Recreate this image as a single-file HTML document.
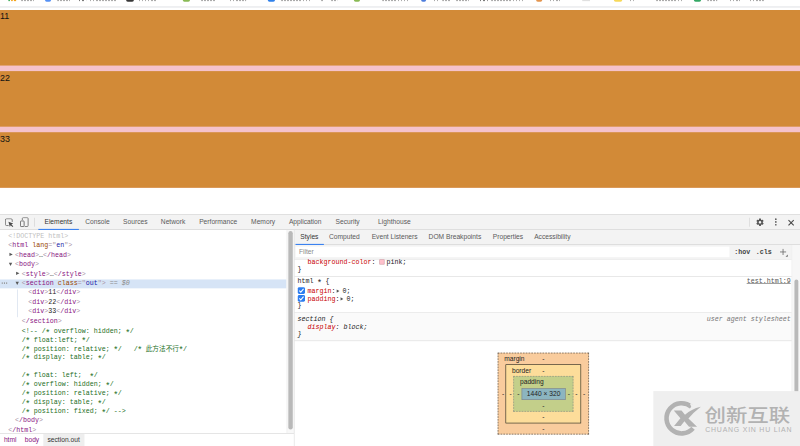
<!DOCTYPE html>
<html lang="en">
<head>
<meta charset="utf-8">
<title>test.html</title>
<style>
html,body{margin:0;padding:0;background:#fff;}
body{width:800px;height:446px;overflow:hidden;position:relative;}
#root{position:absolute;left:0;top:0;width:1440px;height:803px;transform:scale(0.555556);transform-origin:0 0;background:#fff;overflow:hidden;font-family:"Liberation Sans","Noto Sans CJK SC",sans-serif;font-size:12px;color:#333;}
.abs{position:absolute;}
#chrome i{position:absolute;display:block;}
/* page */
#page{position:absolute;left:0;top:18px;width:1440px;height:320px;background:#f5c2cb;}
#page div{height:100px;margin-bottom:10px;background:#d28a37;font-size:16px;line-height:22px;color:#111;padding-top:1px;box-sizing:border-box;}
/* devtools */
#dt{position:absolute;left:0;top:386px;width:1440px;height:417px;background:#fff;}
#tb{position:absolute;left:0;top:0;width:1440px;height:28px;z-index:4;box-sizing:border-box;background:#f3f3f3;border-top:1px solid #cdcdcd;border-bottom:1px solid #cdcdcd;}
.tab{position:absolute;top:0;height:25px;line-height:25px;font-size:12px;color:#5a5a5a;white-space:nowrap;}
.tab.sel{color:#333;}
.mono{font-family:"Liberation Mono","Noto Sans CJK SC",monospace;font-size:12px;}
#tree{position:absolute;left:0;top:29px;width:516px;height:366px;overflow:hidden;}
.row{position:absolute;left:0;white-space:pre;height:17px;line-height:17px;font-family:"Liberation Mono","Noto Sans CJK SC",monospace;font-size:12px;color:#222;}
.t{color:#881280;} .b{color:#a894a6;} .an{color:#994500;} .av{color:#1a1aa6;} .c{color:#236e25;} .g{color:#c0c0c0;}
.arr{position:absolute;width:0;height:0;}
.arr.r{border-left:6px solid #585858;border-top:3.8px solid transparent;border-bottom:3.8px solid transparent;}
.arr.d{border-top:6px solid #585858;border-left:3.8px solid transparent;border-right:3.8px solid transparent;}
#crumbs{position:absolute;left:0;top:394px;width:529px;height:23px;border-top:1px solid #d0d0d0;box-sizing:border-box;background:#fff;}
#crumbs span{position:absolute;top:0;height:22px;line-height:22px;font-size:12px;}
/* styles pane */
#side{position:absolute;left:530px;top:27px;width:910px;height:390px;background:#fff;}
#stabs{position:absolute;left:0;top:0;width:910px;height:28px;background:#f3f3f3;border-bottom:1px solid #cdcdcd;box-sizing:border-box;}
.srow{position:absolute;white-space:pre;font-family:"Liberation Mono","Noto Sans CJK SC",monospace;font-size:12px;line-height:14px;height:14px;color:#222;}
.pn{color:#c80000;}
.ast{display:inline-block;width:7.200px;font-size:15px;line-height:10px;height:10px;position:relative;top:5px;left:-0.900px;}
.sep{position:absolute;left:-1px;width:896px;height:1px;background:#d6d6d6;}
.cb{position:absolute;width:13px;height:12px;border-radius:2.500px;background:#2b7cf0;}
.bm{position:absolute;box-sizing:border-box;}
.bl{position:absolute;font-size:12px;line-height:14px;color:#222;white-space:nowrap;}
</style>
</head>
<body>
<div id="root">

<!-- browser chrome sliver -->
<div id="chrome" class="abs" style="left:0;top:0;width:1440px;height:18px;background:#fff;">
  <div class="abs" style="left:0;top:11.300px;width:1440px;height:2.600px;background:#eceef0;"></div>
  <i style="left:37.8px;width:23.4px;top:0;height:2.200px;background:repeating-linear-gradient(90deg,#666 0 2.500px,transparent 2.500px 5.500px);opacity:.55"></i>
  <i style="left:102.6px;width:23.4px;top:0;height:2.200px;background:repeating-linear-gradient(90deg,#666 0 2.500px,transparent 2.500px 5.500px);opacity:.55"></i>
  <i style="left:142.2px;width:12.6px;top:0;height:2.200px;background:repeating-linear-gradient(90deg,#222 0 2.500px,transparent 2.500px 6px);opacity:.6"></i>
  <i style="left:162.0px;width:46.8px;top:0;height:2.200px;background:repeating-linear-gradient(90deg,#666 0 2.500px,transparent 2.500px 5.500px);opacity:.55"></i>
  <i style="left:250.2px;width:30.6px;top:0;height:2.200px;background:repeating-linear-gradient(90deg,#666 0 2.500px,transparent 2.500px 5.500px);opacity:.55"></i>
  <i style="left:361.8px;width:25.2px;top:0;height:2.200px;background:repeating-linear-gradient(90deg,#666 0 2.500px,transparent 2.500px 5.500px);opacity:.55"></i>
  <i style="left:414.0px;width:28.8px;top:0;height:2.200px;background:repeating-linear-gradient(90deg,#666 0 2.500px,transparent 2.500px 5.500px);opacity:.55"></i>
  <i style="left:505.8px;width:54.0px;top:0;height:2.200px;background:repeating-linear-gradient(90deg,#666 0 2.500px,transparent 2.500px 5.500px);opacity:.55"></i>
  <i style="left:577.8px;width:5.4px;top:0;height:2.200px;background:repeating-linear-gradient(90deg,#666 0 2.500px,transparent 2.500px 5.500px);opacity:.55"></i>
  <i style="left:595.8px;width:10.8px;top:0;height:2.200px;background:repeating-linear-gradient(90deg,#666 0 2.500px,transparent 2.500px 5.500px);opacity:.55"></i>
  <i style="left:687.6px;width:50.4px;top:0;height:2.200px;background:repeating-linear-gradient(90deg,#666 0 2.500px,transparent 2.500px 5.500px);opacity:.55"></i>
  <i style="left:781.2px;width:9.0px;top:0;height:2.200px;background:repeating-linear-gradient(90deg,#666 0 2.500px,transparent 2.500px 5.500px);opacity:.55"></i>
  <i style="left:795.6px;width:14.4px;top:0;height:2.200px;background:repeating-linear-gradient(90deg,#666 0 2.500px,transparent 2.500px 5.500px);opacity:.55"></i>
  <i style="left:820.8px;width:23.4px;top:0;height:2.200px;background:repeating-linear-gradient(90deg,#666 0 2.500px,transparent 2.500px 5.500px);opacity:.55"></i>
  <i style="left:864.0px;width:13.5px;top:0;height:2.200px;background:repeating-linear-gradient(90deg,#222 0 2.500px,transparent 2.500px 6px);opacity:.6"></i>
  <i style="left:883.8px;width:61.2px;top:0;height:2.200px;background:repeating-linear-gradient(90deg,#666 0 2.500px,transparent 2.500px 5.500px);opacity:.55"></i>
  <i style="left:990.0px;width:18.0px;top:0;height:2.200px;background:repeating-linear-gradient(90deg,#666 0 2.500px,transparent 2.500px 5.500px);opacity:.55"></i>
  <i style="left:1047.6px;width:14.4px;top:0;height:1.800px;background:#ccc;opacity:.6"></i>
  <i style="left:1134.0px;width:7.2px;top:0;height:2.200px;background:repeating-linear-gradient(90deg,#666 0 2.500px,transparent 2.500px 5.500px);opacity:.55"></i>
  <i style="left:1180.8px;width:46.8px;top:0;height:2.200px;background:repeating-linear-gradient(90deg,#666 0 2.500px,transparent 2.500px 5.500px);opacity:.55"></i>
  <i style="left:1272.6px;width:18.0px;top:0;height:2.200px;background:repeating-linear-gradient(90deg,#666 0 2.500px,transparent 2.500px 5.500px);opacity:.55"></i>
  <i style="left:1314.0px;width:18.0px;top:0;height:2.200px;background:repeating-linear-gradient(90deg,#666 0 2.500px,transparent 2.500px 5.500px);opacity:.55"></i>
  <i style="left:1350.0px;width:25.2px;top:0;height:2.200px;background:repeating-linear-gradient(90deg,#666 0 2.500px,transparent 2.500px 5.500px);opacity:.55"></i>
  <i style="left:15.1px;width:3.2px;top:0;height:2px;background:#34a853;opacity:.9"></i>
  <i style="left:20.2px;width:3.2px;top:0;height:2px;background:#f29900;opacity:.9"></i><i style="left:25.2px;width:3.8px;top:0;height:2px;background:#f29900;opacity:.9"></i>
  <i style="left:81.0px;width:10.8px;top:0;height:2.800px;background:#4285f4;opacity:.9;border-radius:0 0 3px 3px"></i>
  <i style="left:226.8px;width:14.4px;top:0;height:2.800px;background:#222;opacity:.9;border-radius:0 0 3px 3px"></i>
  <i style="left:328.5px;width:13.5px;top:0;height:2.800px;background:#7cb342;opacity:.9;border-radius:0 0 3px 3px"></i>
  <i style="left:481.5px;width:13.5px;top:0;height:2.800px;background:#1a73e8;opacity:.9;border-radius:0 0 3px 3px"></i>
  <i style="left:637.2px;width:10.8px;top:0;height:2.800px;background:#7cb342;opacity:.9;border-radius:0 0 3px 3px"></i>
  <i style="left:757.8px;width:9.0px;top:0;height:2.800px;background:#3b6fd8;opacity:.9;border-radius:0 0 3px 3px"></i>
  <i style="left:964.8px;width:11.7px;top:0;height:2.800px;background:#e08a3c;opacity:.9;border-radius:0 0 3px 3px"></i>
  <i style="left:1105.2px;width:14.4px;top:0;height:2.800px;background:#f6d548;opacity:.9;border-radius:0 0 3px 3px"></i>
  <i style="left:1249.2px;width:12.6px;top:0;height:2.800px;background:#1e9e54;opacity:.9;border-radius:0 0 3px 3px"></i>
</div>

<!-- page -->
<section id="page"><div>11</div><div>22</div><div>33</div></section>

<!-- devtools -->
<div id="dt">
  <div id="tb">
    <svg class="abs" style="left:9px;top:6px;" width="17" height="17" viewBox="0 0 17 17"><path d="M13 6.500V2.900a2.200 2.200 0 0 0-2.200-2.200H2.900a2.200 2.200 0 0 0-2.200 2.200v7.900a2.200 2.200 0 0 0 2.200 2.200H6.500" fill="none" stroke="#6a6a6a" stroke-width="1.500"/><path d="M6.200 6.200l8.600 3.300-3.300 1.400 3.400 3.400-1.400 1.400-3.400-3.400-1.400 3.300z" fill="#4a4a4a"/></svg>
    <svg class="abs" style="left:36px;top:4px;" width="17" height="18" viewBox="0 0 17 18"><path d="M4.200 5V2.400a1.700 1.700 0 0 1 1.700-1.700h7a1.700 1.700 0 0 1 1.700 1.700v12.700a1.700 1.700 0 0 1-1.700 1.700H8.500" fill="none" stroke="#6a6a6a" stroke-width="1.500"/><rect x="0.800" y="6.700" width="6.600" height="10.100" rx="1.300" fill="none" stroke="#5a5a5a" stroke-width="1.500"/></svg>
    <div class="abs" style="left:61.500px;top:5px;width:1px;height:16px;background:#cacaca;"></div>
    <div class="tab sel" style="left:80px;">Elements</div>
    <div class="abs" style="left:69px;top:24.500px;width:73px;height:2.500px;background:#3b82f0;"></div>
    <div class="tab" style="left:153.5px;">Console</div>
    <div class="tab" style="left:221.5px;">Sources</div>
    <div class="tab" style="left:289.5px;">Network</div>
    <div class="tab" style="left:358.5px;">Performance</div>
    <div class="tab" style="left:452px;">Memory</div>
    <div class="tab" style="left:520px;">Application</div>
    <div class="tab" style="left:604px;">Security</div>
    <div class="tab" style="left:680.5px;">Lighthouse</div>
    <div class="abs" style="left:1349px;top:5px;width:1px;height:16px;background:#cfcfcf;"></div>
    <svg class="abs" style="left:1360px;top:5px;" width="16" height="16" viewBox="0 0 24 24"><path fill="#555" d="M19.43 12.98c.04-.32.07-.64.07-.98s-.03-.66-.07-.98l2.11-1.65c.19-.15.24-.42.12-.64l-2-3.46c-.12-.22-.39-.3-.61-.22l-2.49 1c-.52-.4-1.08-.73-1.69-.98l-.38-2.65A.488.488 0 0 0 14 2h-4c-.25 0-.46.18-.49.42l-.38 2.65c-.61.25-1.17.59-1.69.98l-2.49-1c-.23-.09-.49 0-.61.22l-2 3.46c-.13.22-.07.49.12.64l2.11 1.65c-.04.32-.07.65-.07.98s.03.66.07.98l-2.11 1.65c-.19.15-.24.42-.12.64l2 3.46c.12.22.39.3.61.22l2.49-1c.52.4 1.08.73 1.69.98l.38 2.65c.03.24.24.42.49.42h4c.25 0 .46-.18.49-.42l.38-2.65c.61-.25 1.17-.59 1.69-.98l2.49 1c.23.09.49 0 .61-.22l2-3.46c.12-.22.07-.49-.12-.64l-2.11-1.65zM12 15.5c-1.93 0-3.500-1.57-3.500-3.500s1.570-3.500 3.500-3.500 3.500 1.570 3.500 3.500-1.570 3.500-3.500 3.500z"/></svg>
    <div class="abs" style="left:1395px;top:6px;width:3px;height:3px;border-radius:50%;background:#555;box-shadow:0 5px 0 #555,0 10px 0 #555;"></div>
    <svg class="abs" style="left:1417px;top:6.500px;" width="14" height="14" viewBox="0 0 14 14"><path d="M2.300 2.300l9.400 9.400M11.700 2.300L2.300 11.700" stroke="#4a4a4a" stroke-width="2" fill="none"/></svg>
  </div>

  <!-- elements tree -->
  <div id="tree">
    <div class="abs" style="left:0;top:88px;width:516px;height:16px;background:#d6e4f6;"></div>
    <div class="abs" style="left:31px;top:106px;width:1px;height:50px;background:#c9d6e8;"></div>
    <div class="row g" style="left:15px;top:2px;">&lt;!DOCTYPE html&gt;</div>
    <div class="row" style="left:15px;top:19px;"><span class="b">&lt;</span><span class="t">html</span> <span class="an">lang</span><span class="b">="</span><span class="av">en</span><span class="b">"&gt;</span></div>
    <div class="arr r" style="left:17px;top:40px;"></div>
    <div class="row" style="left:27px;top:36px;"><span class="b">&lt;</span><span class="t">head</span><span class="b">&gt;</span>…<span class="b">&lt;</span><span class="t">/head</span><span class="b">&gt;</span></div>
    <div class="arr d" style="left:16px;top:57.500px;"></div>
    <div class="row" style="left:27px;top:53px;"><span class="b">&lt;</span><span class="t">body</span><span class="b">&gt;</span></div>
    <div class="arr r" style="left:29px;top:74px;"></div>
    <div class="row" style="left:39px;top:70px;"><span class="b">&lt;</span><span class="t">style</span><span class="b">&gt;</span>…<span class="b">&lt;</span><span class="t">/style</span><span class="b">&gt;</span></div>
    <div class="abs" style="left:2.500px;top:93px;width:2.500px;height:2.500px;border-radius:50%;background:#8e8e8e;box-shadow:4px 0 0 #8e8e8e,8px 0 0 #8e8e8e;"></div>
    <div class="arr d" style="left:28px;top:91.500px;"></div>
    <div class="row" style="left:39px;top:87px;"><span class="b">&lt;</span><span class="t">section</span> <span class="an">class</span><span class="b">="</span><span class="av">out</span><span class="b">"&gt;</span><span style="color:#8a8a8a"> == <i>$0</i></span></div>
    <div class="row" style="left:51px;top:104px;"><span class="b">&lt;</span><span class="t">div</span><span class="b">&gt;</span>11<span class="b">&lt;</span><span class="t">/div</span><span class="b">&gt;</span></div>
    <div class="row" style="left:51px;top:121px;"><span class="b">&lt;</span><span class="t">div</span><span class="b">&gt;</span>22<span class="b">&lt;</span><span class="t">/div</span><span class="b">&gt;</span></div>
    <div class="row" style="left:51px;top:138px;"><span class="b">&lt;</span><span class="t">div</span><span class="b">&gt;</span>33<span class="b">&lt;</span><span class="t">/div</span><span class="b">&gt;</span></div>
    <div class="row" style="left:39px;top:155px;"><span class="b">&lt;</span><span class="t">/section</span><span class="b">&gt;</span></div>
    <div class="row c" style="left:39px;top:172.600px;height:160px;line-height:16px;">&lt;!-- /<span class="ast">*</span> overflow: hidden; <span class="ast">*</span>/
/<span class="ast">*</span> float:left; <span class="ast">*</span>/
/<span class="ast">*</span> position: relative; <span class="ast">*</span>/   /<span class="ast">*</span> 此方法不行<span class="ast">*</span>/
/<span class="ast">*</span> display: table; <span class="ast">*</span>/

/<span class="ast">*</span> float: left;  <span class="ast">*</span>/
/<span class="ast">*</span> overflow: hidden; <span class="ast">*</span>/
/<span class="ast">*</span> position: relative; <span class="ast">*</span>/
/<span class="ast">*</span> display: table; <span class="ast">*</span>/
/<span class="ast">*</span> position: fixed; <span class="ast">*</span>/ --&gt;</div>
    <div class="row" style="left:27px;top:333.700px;"><span class="b">&lt;</span><span class="t">/body</span><span class="b">&gt;</span></div>
    <div class="row" style="left:15px;top:350.700px;"><span class="b">&lt;</span><span class="t">/html</span><span class="b">&gt;</span></div>
  </div>
  <!-- left scrollbar -->
  <div class="abs" style="left:515.500px;top:27px;width:14px;height:367px;background:#f8f8f8;border-left:1px solid #ececec;box-sizing:border-box;"></div>
  <div class="abs" style="left:529px;top:27px;width:1px;height:390px;background:#d9d9d9;z-index:3;"></div>
  <div class="abs" style="left:518.800px;top:30px;width:8px;height:356.500px;border-radius:4px;background:#b9b9b9;"></div>

  <div id="crumbs">
    <span style="left:7px;color:#881280;">html</span>
    <span style="left:44.5px;color:#881280;">body</span>
    <span style="left:77.500px;width:74.500px;background:#eeeeee;"></span>
    <span style="left:85.500px;color:#333;">section.out</span>
  </div>

  <!-- styles sidebar -->
  <div id="side">
    <div id="stabs">
      <div class="tab sel" style="left:10.500px;top:1px;">Styles</div>
      <div class="abs" style="left:2px;top:25.500px;width:51px;height:2.500px;background:#3b82f0;"></div>
      <div class="tab" style="left:62px;top:1px;">Computed</div>
      <div class="tab" style="left:139px;top:1px;">Event Listeners</div>
      <div class="tab" style="left:241.500px;top:1px;">DOM Breakpoints</div>
      <div class="tab" style="left:357px;top:1px;">Properties</div>
      <div class="tab" style="left:431.500px;top:1px;">Accessibility</div>
    </div>
    <!-- filter row -->
    <div class="abs" style="left:0;top:28px;width:910px;height:27px;background:#f3f3f3;border-bottom:1px solid #e9e9e9;box-sizing:border-box;"></div>
    <div class="abs" style="left:2px;top:30.700px;width:780.500px;height:19px;background:#fff;"></div>
    <div class="abs" style="left:8px;top:30px;line-height:22px;font-size:12px;color:#8a8a8a;">Filter</div>
    <div class="abs mono" style="left:791.500px;top:30.500px;line-height:22px;color:#444;font-weight:bold;">:hov</div>
    <div class="abs mono" style="left:830.500px;top:30.500px;line-height:22px;color:#444;font-weight:bold;">.cls</div>
    <svg class="abs" style="left:873px;top:34px;" width="16" height="16" viewBox="0 0 16 16"><path d="M6.500 1v11M1 6.500h11" stroke="#666" stroke-width="1.4" fill="none"/><path d="M15 11v4h-4z" fill="#666"/></svg>

    <!-- rules -->
    <div class="abs" style="left:1px;top:0;width:909px;height:390px;">
    <div class="srow" style="left:22.500px;top:52px;"><span class="pn">background-color</span>: <span style="display:inline-block;width:9px;height:9px;background:#ffc0cb;border:1px solid #c9a0a8;box-sizing:border-box;vertical-align:-1px;margin-right:3.400px;"></span>pink;</div>
    <div class="srow" style="left:4.500px;top:64.500px;">}</div>
    <div class="sep" style="top:84px;"></div>
    <div class="srow" style="left:4.500px;top:86px;">html <span class="ast">*</span> {</div>
    <div class="srow" style="right:16.800px;top:86px;color:#555;text-decoration:underline;">test.html:9</div>
    <div class="cb" style="left:4.500px;top:103.500px;"></div>
    <svg class="abs" style="left:4.500px;top:103.500px;" width="13" height="12" viewBox="0 0 13 12"><path d="M2.800 6.200l2.600 2.600 5-5.800" stroke="#fff" stroke-width="1.900" fill="none"/></svg>
    <div class="srow" style="left:22.500px;top:104px;"><span class="pn">margin</span>:<span style="display:inline-block;width:0;height:0;border-left:5px solid #555;border-top:3px solid transparent;border-bottom:3px solid transparent;margin:0 -1.600px 0 2px;vertical-align:0.500px;"></span> 0;</div>
    <div class="cb" style="left:4.500px;top:118.300px;"></div>
    <svg class="abs" style="left:4.500px;top:118.300px;" width="13" height="12" viewBox="0 0 13 12"><path d="M2.800 6.200l2.600 2.600 5-5.800" stroke="#fff" stroke-width="1.900" fill="none"/></svg>
    <div class="srow" style="left:22.500px;top:118px;"><span class="pn">padding</span>:<span style="display:inline-block;width:0;height:0;border-left:5px solid #555;border-top:3px solid transparent;border-bottom:3px solid transparent;margin:0 -1.600px 0 2px;vertical-align:0.500px;"></span> 0;</div>
    <div class="srow" style="left:4.500px;top:130px;">}</div>
    <div class="sep" style="top:149px;"></div>
    <div class="abs" style="left:-1px;top:150px;width:896px;height:50px;background:#fafafa;"></div>
    <div class="srow" style="left:4.500px;top:153.500px;font-style:italic;">section {</div>
    <div class="srow" style="right:16.800px;top:153.500px;font-style:italic;color:#777;">user agent stylesheet</div>
    <div class="srow" style="left:22.500px;top:170px;font-style:italic;"><span class="pn">display</span>: block;</div>
    <div class="srow" style="left:4.500px;top:181px;font-style:italic;">}</div>
    <div class="sep" style="top:200px;"></div>

    <!-- box model -->
    <div class="bm" style="left:364.500px;top:221.500px;width:164px;height:147.500px;background:#f9cc9d;border:1px dashed #333;"></div>
    <div class="bm" style="left:378.500px;top:242.500px;width:136.200px;height:106.500px;background:#fddd9a;border:1px solid #111;"></div>
    <div class="bm" style="left:393px;top:264px;width:107.700px;height:63.500px;background:#c3cf8a;border:1px dashed #808080;"></div>
    <div class="bm" style="left:407.500px;top:285.500px;width:79.500px;height:21px;background:#8cb5c0;border:1px solid #808080;"></div>
    <div class="bl" style="left:376.500px;top:225.500px;">margin</div>
    <div class="bl" style="left:390.500px;top:246.500px;">border</div>
    <div class="bl" style="left:405px;top:267.500px;">padding</div>
    <div class="bl" style="left:407.500px;top:289px;width:80px;text-align:center;">1440 × 320</div>
    <div class="bl" style="left:444.500px;top:225.500px;width:5px;text-align:center;">-</div>
    <div class="bl" style="left:444.500px;top:246.500px;width:5px;text-align:center;">-</div>
    <div class="bl" style="left:444.500px;top:310px;width:5px;text-align:center;">-</div>
    <div class="bl" style="left:444.500px;top:330.500px;width:5px;text-align:center;">-</div>
    <div class="bl" style="left:444.500px;top:352px;width:5px;text-align:center;">-</div>
    <div class="bl" style="left:372px;top:289px;width:5px;text-align:center;">-</div>
    <div class="bl" style="left:385.500px;top:289px;width:5px;text-align:center;">-</div>
    <div class="bl" style="left:399.500px;top:289px;width:5px;text-align:center;">-</div>
    <div class="bl" style="left:490.500px;top:289px;width:5px;text-align:center;">-</div>
    <div class="bl" style="left:504px;top:289px;width:5px;text-align:center;">-</div>
    <div class="bl" style="left:518px;top:289px;width:5px;text-align:center;">-</div>

    </div>
    <!-- right scrollbar -->
    <div class="abs" style="left:895px;top:28px;width:15px;height:362px;background:#f7f7f7;border-left:1px solid #ededed;box-sizing:border-box;"></div>
    <div class="abs" style="left:899.500px;top:90px;width:7px;height:280px;border-radius:3.500px;background:#b9b9b9;"></div>
  </div>

  <!-- watermark -->
  <div class="abs" style="left:1176px;top:318px;width:264px;height:99px;background:#efefef;">
    <svg class="abs" style="left:13.200px;top:11.600px;" width="89" height="74.500" viewBox="-36 -36 86 72">
      <path d="M17.500 -20.500A26.300 26.300 0 1 0 20.500 17" fill="none" stroke="#b2b2b2" stroke-width="8"/>
      <path d="M15 -26l9 3-5 6z" fill="#efefef"/>
      <path d="M-13 -14H0.500l6 7.500Q17 -16.500 34 -20.500Q21 -10.500 12.500 0L27.500 14.500H13.500L5.500 5l-6.500 8h-11.500L-1.500 -0.500z" fill="#b2b2b2"/>
    </svg>
    <div class="abs" style="left:92px;top:25px;font-family:'Liberation Sans','Noto Sans CJK SC',sans-serif;font-weight:500;font-size:33px;line-height:40px;color:#b2b2b2;white-space:nowrap;transform:scaleX(1.170);transform-origin:0 0;">创新互联</div>
    <div class="abs" style="left:93.500px;top:61.500px;font-size:12.500px;line-height:14px;color:#b2b2b2;white-space:nowrap;letter-spacing:1.400px;">CHUANG XIN HU LIAN</div>
  </div>
</div>

</div>
</body>
</html>
